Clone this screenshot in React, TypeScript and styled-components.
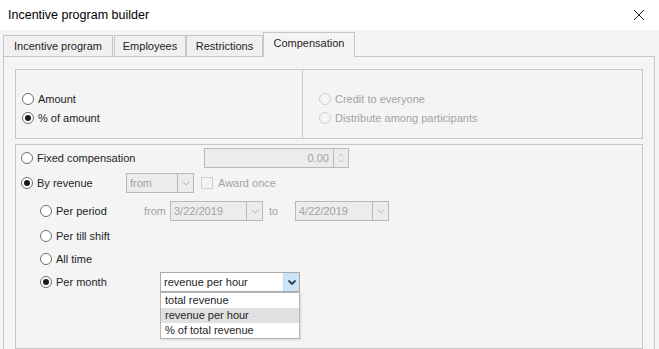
import { Fragment } from 'react';
import styled, { createGlobalStyle, css } from 'styled-components';

const GlobalStyle = createGlobalStyle`
  html, body {
    margin: 0;
    padding: 0;
    background: #f4f4f4;
    overflow: hidden;
  }
  body {
    font-family: 'Liberation Sans', Arial, sans-serif;
    font-size: 11px;
    color: #1e1e1e;
  }
`;

const Window = styled.div`
  width: 659px;
  height: 349px;
  display: flex;
  flex-direction: column;
  overflow: hidden;
`;

const TitleBar = styled.div`
  height: 30px;
  flex: none;
  background: #fff;
  display: flex;
  align-items: center;
  justify-content: space-between;
  padding: 0 14px 0 8px;
  font-size: 12.5px;
  color: #000;
`;

const CloseButton = styled.div`
  width: 12px;
  height: 12px;
  display: flex;
`;

const Body = styled.div`
  flex: 1;
  display: flex;
  flex-direction: column;
  padding: 2px 4px 0 3px;
  min-height: 0;
`;

const TabStrip = styled.div`
  display: flex;
  align-items: flex-end;
  height: 24px;
  flex: none;
  position: relative;
  z-index: 1;
`;

const Tab = styled.div<{ $w: number; $active?: boolean }>`
  width: ${({ $w }) => $w}px;
  height: 21px;
  box-sizing: border-box;
  border: 1px solid #c6c6c6;
  border-bottom: none;
  background: #f0f0f0;
  display: flex;
  align-items: center;
  justify-content: center;
  padding-bottom: 1px;
  ${({ $active }) =>
    $active &&
    css`
      height: 25px;
      margin-bottom: -1px;
      background: #f4f4f4;
      padding-bottom: 4px;
    `}
`;

const TabGap = styled.div`
  width: 1px;
`;

const Panel = styled.div`
  flex: 1;
  border: 1px solid #c6c6c6;
  border-bottom: none;
  padding: 12px 11px 0 11px;
  display: flex;
  flex-direction: column;
  gap: 5px;
`;

const Group = styled.div<{ $h?: number }>`
  border: 1px solid #c6c6c6;
  ${({ $h }) => ($h ? `height: ${$h}px;` : 'flex: 1;')}
  box-sizing: border-box;
  position: relative;
`;

const SplitGroup = styled(Group)`
  display: grid;
  grid-template-columns: 286px 1fr;
`;

const Column = styled.div<{ $pl: number; $divider?: boolean }>`
  padding: 19px 0 0 ${({ $pl }) => $pl}px;
  ${({ $divider }) => $divider && 'border-left: 1px solid #c6c6c6;'}
`;

const RadioRow = styled.div<{ $h?: number }>`
  height: ${({ $h }) => $h ?? 19}px;
  display: flex;
  align-items: center;
`;

const RadioCircle = styled.span<{ $checked?: boolean; $disabled?: boolean }>`
  width: 12px;
  height: 12px;
  box-sizing: border-box;
  border-radius: 50%;
  border: 1px solid ${({ $disabled }) => ($disabled ? '#cfcfcf' : '#6f6f6f')};
  background: ${({ $disabled }) => ($disabled ? '#f4f4f4' : '#fff')};
  display: flex;
  align-items: center;
  justify-content: center;
  flex: none;
  &::after {
    content: '';
    width: 6px;
    height: 6px;
    border-radius: 50%;
    background: #1a1a1a;
    display: ${({ $checked }) => ($checked ? 'block' : 'none')};
  }
`;

const Label = styled.span<{ $w?: number; $disabled?: boolean; $gap?: number }>`
  margin-left: ${({ $gap }) => $gap ?? 4}px;
  color: ${({ $disabled }) => ($disabled ? '#a3a3a3' : '#1e1e1e')};
  white-space: nowrap;
  ${({ $w }) => $w && `width: ${$w}px;`}
`;

const Rows = styled.div`
  padding: 3px 0 0 5px;
  display: flex;
  flex-direction: column;
`;

const Row = styled.div<{ $mt: number; $indent?: boolean }>`
  height: 20px;
  margin-top: ${({ $mt }) => $mt}px;
  padding-left: ${({ $indent }) => ($indent ? 19 : 0)}px;
  display: flex;
  align-items: center;
  position: relative;
`;

const Field = styled.div<{ $w: number; $disabled?: boolean }>`
  width: ${({ $w }) => $w}px;
  height: 20px;
  box-sizing: border-box;
  border: 1px solid ${({ $disabled }) => ($disabled ? '#b9b9b9' : '#acacac')};
  background: ${({ $disabled }) => ($disabled ? '#ececec' : '#fff')};
  color: ${({ $disabled }) => ($disabled ? '#a3a3a3' : '#1e1e1e')};
  display: flex;
  align-items: stretch;
  flex: none;
`;

const FieldText = styled.span<{ $right?: boolean }>`
  flex: 1;
  display: flex;
  align-items: center;
  justify-content: ${({ $right }) => ($right ? 'flex-end' : 'flex-start')};
  padding: 0 ${({ $right }) => ($right ? 4 : 3)}px;
`;

const DropButton = styled.span<{ $hot?: boolean }>`
  width: 15px;
  border-left: 1px solid ${({ $hot }) => ($hot ? '#c5d9ee' : '#b9b9b9')};
  background: ${({ $hot }) => ($hot ? '#cce4f7' : 'transparent')};
  display: flex;
  align-items: center;
  justify-content: center;
`;

const SpinButtons = styled.span`
  width: 14px;
  border-left: 1px solid #b9b9b9;
  display: flex;
  flex-direction: column;
  align-items: center;
  justify-content: center;
  gap: 2px;
`;

const Checkbox = styled.span`
  width: 12px;
  height: 12px;
  box-sizing: border-box;
  border: 1px solid #cfcfcf;
  background: #f4f4f4;
  margin-left: 7px;
  flex: none;
`;

const Plain = styled.span<{ $w?: number; $ml?: number; $disabled?: boolean }>`
  margin-left: ${({ $ml }) => $ml ?? 0}px;
  ${({ $w }) => $w && `width: ${$w}px;`}
  color: ${({ $disabled }) => ($disabled ? '#a3a3a3' : '#1e1e1e')};
  flex: none;
`;

const DropList = styled.div`
  position: absolute;
  left: 139px;
  top: 20px;
  width: 140px;
  box-sizing: border-box;
  border: 1px solid #b5b5b5;
  background: #fff;
  box-shadow: 1px 1px 2px rgba(0, 0, 0, 0.12);
  padding: 0;
`;

const DropItem = styled.div<{ $selected?: boolean }>`
  height: 15px;
  line-height: 15px;
  padding-left: 4px;
  background: ${({ $selected }) => ($selected ? '#e0e0e0' : '#fff')};
  color: #1e1e1e;
`;

const Chevron = ({ color = '#b8b8b8', bold = false }: { color?: string; bold?: boolean }) => (
  <svg width="8" height="5" viewBox="0 0 8 5">
    <path d="M0.5 0.5 L4 4 L7.5 0.5" fill="none" stroke={color} strokeWidth={bold ? 1.8 : 1} />
  </svg>
);

const ChevronUp = () => (
  <svg width="6" height="4" viewBox="0 0 6 4">
    <path d="M0.5 3.5 L3 1 L5.5 3.5" fill="none" stroke="#c4c4c4" strokeWidth="1" />
  </svg>
);

const ChevronDown = () => (
  <svg width="6" height="4" viewBox="0 0 6 4">
    <path d="M0.5 0.5 L3 3 L5.5 0.5" fill="none" stroke="#c4c4c4" strokeWidth="1" />
  </svg>
);

const Radio = ({
  label,
  checked,
  disabled,
  width,
}: {
  label: string;
  checked?: boolean;
  disabled?: boolean;
  width?: number;
}) => (
  <>
    <RadioCircle $checked={checked} $disabled={disabled} />
    <Label $disabled={disabled} $w={width}>
      {label}
    </Label>
  </>
);

const Combo = ({ value, width, disabled = true }: { value: string; width: number; disabled?: boolean }) => (
  <Field $w={width} $disabled={disabled}>
    <FieldText>{value}</FieldText>
    <DropButton $hot={!disabled}>
      {disabled ? <Chevron /> : <Chevron color="#2b3a4a" bold />}
    </DropButton>
  </Field>
);

const tabs = [
  { label: 'Incentive program', w: 110 },
  { label: 'Employees', w: 72 },
  { label: 'Restrictions', w: 77 },
  { label: 'Compensation', w: 92, active: true },
];

const App = () => (
  <Window>
    <GlobalStyle />
    <TitleBar>
      <span>Incentive program builder</span>
      <CloseButton>
        <svg width="12" height="12" viewBox="0 0 12 12">
          <path d="M1 1 L11 11 M11 1 L1 11" stroke="#222" strokeWidth="1" />
        </svg>
      </CloseButton>
    </TitleBar>
    <Body>
      <TabStrip>
        {tabs.map((t, i) => (
          <Fragment key={t.label}>
            {i === 1 && <TabGap />}
            <Tab $w={t.w} $active={t.active}>
              {t.label}
            </Tab>
          </Fragment>
        ))}
      </TabStrip>
      <Panel>
        <SplitGroup $h={70}>
          <Column $pl={6}>
            <RadioRow>
              <Radio label="Amount" />
            </RadioRow>
            <RadioRow>
              <Radio label="% of amount" checked />
            </RadioRow>
          </Column>
          <Column $pl={16} $divider>
            <RadioRow>
              <Radio label="Credit to everyone" disabled />
            </RadioRow>
            <RadioRow>
              <Radio label="Distribute among participants" disabled />
            </RadioRow>
          </Column>
        </SplitGroup>
        <Group>
          <Rows>
            <Row $mt={0}>
              <Radio label="Fixed compensation" width={167} />
              <Field $w={145} $disabled>
                <FieldText $right>0.00</FieldText>
                <SpinButtons>
                  <ChevronUp />
                  <ChevronDown />
                </SpinButtons>
              </Field>
            </Row>
            <Row $mt={5}>
              <Radio label="By revenue" width={89} checked />
              <Combo value="from" width={68} />
              <Checkbox />
              <Plain $ml={5} $disabled>
                Award once
              </Plain>
            </Row>
            <Row $mt={8} $indent>
              <Radio label="Per period" width={88} />
              <Plain $w={26} $disabled>
                from
              </Plain>
              <Combo value="3/22/2019" width={93} />
              <Plain $ml={6} $w={26} $disabled>
                to
              </Plain>
              <Combo value="4/22/2019" width={94} />
            </Row>
            <Row $mt={5} $indent>
              <Radio label="Per till shift" />
            </Row>
            <Row $mt={3} $indent>
              <Radio label="All time" />
            </Row>
            <Row $mt={3} $indent>
              <Radio label="Per month" width={104} checked />
              <Combo value="revenue per hour" width={140} disabled={false} />
              <DropList>
                <DropItem>total revenue</DropItem>
                <DropItem $selected>revenue per hour</DropItem>
                <DropItem>% of total revenue</DropItem>
              </DropList>
            </Row>
          </Rows>
        </Group>
      </Panel>
    </Body>
  </Window>
);

export default App;
